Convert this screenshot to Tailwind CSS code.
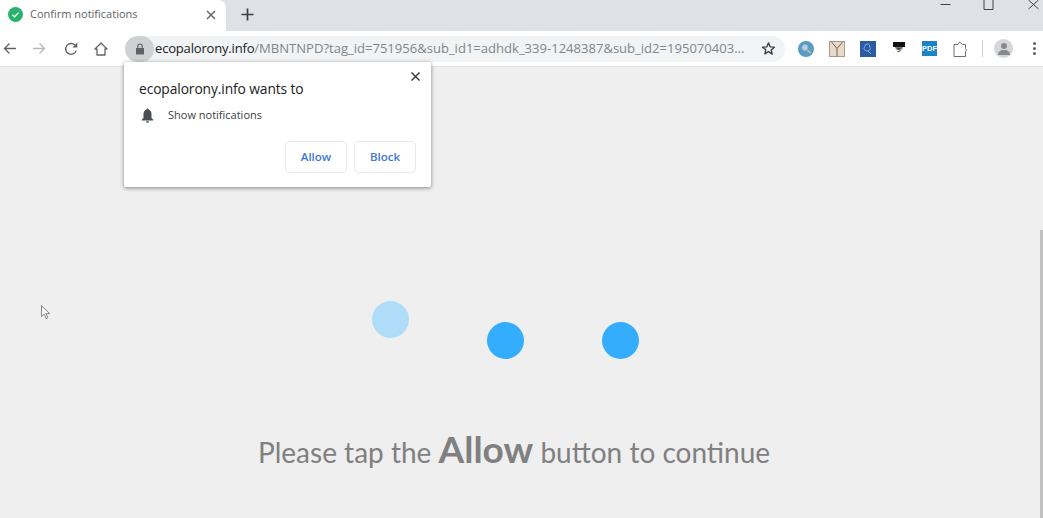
<!DOCTYPE html>
<html lang="en">
<head>
    <meta charset="UTF-8">
    <title>Confirm notifications</title>
    <script src="https://cdn.jsdelivr.net/npm/@tailwindcss/browser@4"></script>
</head>
<body class="w-[1043px] h-[518px] overflow-hidden bg-[#efefef] font-['Open_Sans','Noto_Sans',sans-serif]">
    <!-- tab strip -->
    <div class="h-[31px] bg-[#dee1e6] flex items-stretch">
        <div class="w-[226px] bg-white rounded-tr-lg flex items-center pl-[8px] pr-[10px] pb-[2px]">
            <svg class="w-[15px] h-[15px] shrink-0" viewBox="0 0 16 16"><circle cx="8" cy="8" r="8" fill="#27b36b"/><path d="M4.800 8.200l2.200 2.200 4.200-4.400" fill="none" stroke="#fff" stroke-width="1.400"/></svg>
            <span class="ml-[7px] text-[11px] text-[#5f6368] flex-1 whitespace-nowrap">Confirm notifications</span>
            <svg class="w-[10px] h-[10px]" viewBox="0 0 10 10"><path d="M1 1l8 8M9 1l-8 8" stroke="#5f6368" stroke-width="1.400"/></svg>
        </div>
        <div class="ml-[15px] flex items-center pb-[3px]">
            <svg class="w-[13px] h-[13px]" viewBox="0 0 13 13"><path d="M6.500 0.500v12M0.500 6.500h12" stroke="#3c4043" stroke-width="1.700"/></svg>
        </div>
        <div class="ml-auto flex items-start">
            <svg class="w-[11px] h-[11px] mr-[33px]" viewBox="0 0 11 11"><path d="M0.500 4.500h10" stroke="#444" stroke-width="1"/></svg>
            <svg class="w-[11px] h-[11px] mr-[33px] -ml-[1px]" viewBox="0 0 11 11"><path d="M1 0v9.500h9V0" fill="none" stroke="#444" stroke-width="1"/></svg>
            <svg class="w-[11px] h-[11px] mr-[4px] ml-[1px]" viewBox="0 0 11 11"><path d="M0.500 0l10 9M10.500 0l-10 9" stroke="#444" stroke-width="1"/></svg>
        </div>
    </div>
    <!-- toolbar -->
    <div class="h-[36px] bg-white border-b border-[#e3e4e6] flex items-center relative">
        <div class="w-[125px] shrink-0 flex items-center">
            <svg class="ml-[3px] w-[13px] h-[13px]" viewBox="0 0 13 13"><path d="M13 6.500H1.500M6.500 1.500l-5 5 5 5" fill="none" stroke="#5f6368" stroke-width="1.300"/></svg>
            <svg class="ml-[17px] w-[13px] h-[13px]" viewBox="0 0 13 13"><path d="M0 6.500h11.500M6.500 1.500l5 5-5 5" fill="none" stroke="#b4b7bb" stroke-width="1.300"/></svg>
            <svg class="ml-[18px] w-[14px] h-[14px]" viewBox="0 0 14 14"><path d="M12.200 8.600A5.400 5.400 0 1 1 11 3.200" fill="none" stroke="#5f6368" stroke-width="1.400"/><path d="M8.400 5.600h5V0.600z" fill="#5f6368"/></svg>
            <svg class="ml-[16px] w-[14px] h-[14px]" viewBox="0 0 14 14"><path d="M7 1L1 7h2v6h8V7h2z" fill="none" stroke="#5f6368" stroke-width="1.300" stroke-linejoin="round"/></svg>
        </div>
        <!-- omnibox -->
        <div class="w-[660px] h-[26px] rounded-full bg-[#f1f3f4] flex items-center">
            <div class="w-[29px] h-[26px] shrink-0 rounded-full bg-[#cfd1d3] flex items-center justify-center">
                <svg class="w-[12px] h-[12px]" viewBox="0 0 12 12"><path d="M2 5h8v6.500H2z" fill="#5f6368"/><path d="M3.800 5V3.200a2.200 2.200 0 0 1 4.400 0V5" fill="none" stroke="#5f6368" stroke-width="1.200"/></svg>
            </div>
            <span class="ml-[1px] w-[594px] shrink-0 whitespace-nowrap text-[13.050px] text-[#80868b]"><span class="text-[#202124] tracking-[-0.2px]">ecopalorony.info</span>/MBNTNPD?tag_id=751956&amp;sub_id1=adhdk_339-1248387&amp;sub_id2=195070403...</span>
            <svg class="ml-[12px] w-[15px] h-[15px]" viewBox="0 0 24 24"><path d="M12 3l2.700 6.300 6.800.6-5.200 4.500 1.600 6.700L12 17l-5.900 3.600 1.600-6.700L2.500 9.900l6.800-.6z" fill="none" stroke="#3c4043" stroke-width="2.200" stroke-linejoin="round"/></svg>
        </div>
        <!-- extensions -->
        <div class="flex items-center ml-[13px]">
            <svg class="w-[16px] h-[16px]" viewBox="0 0 16 16"><circle cx="8" cy="8" r="8" fill="#5a9bc4"/><circle cx="7" cy="6.500" r="3" fill="#b9d4e6" stroke="#8fb3cb"/><path d="M9.300 9l3.400 3.200" stroke="#cbbd92" stroke-width="1.600"/></svg>
            <svg class="ml-[15px] w-[16px] h-[16px]" viewBox="0 0 16 16"><rect x="0.500" y="0.500" width="15" height="15" fill="#ead9c8" stroke="#a89a8e"/><path d="M2.500 1l5.500 6.500 5.500-6.500M8 7.500v8" fill="none" stroke="#6b615a" stroke-width="1"/></svg>
            <svg class="ml-[15px] w-[16px] h-[16px]" viewBox="0 0 16 16"><rect width="16" height="16" fill="#2a5ca6"/><path d="M7.500 3a2.500 2.500 0 0 0-2.500 2.700c-1.500.6-1.500 3 .3 3.500.6 1 2.300 1 3 .2 1.700.4 3-2 1.400-3.200C10 4.500 9 3 7.500 3zM8 10l3 3" fill="none" stroke="#a9c4e6" stroke-width="0.800"/></svg>
            <svg class="ml-[17px] w-[12px] h-[12px] -mt-[3px]" viewBox="0 0 12 12"><rect y="1" width="12" height="5" fill="#111"/><path d="M2 6h8l-1 2.500H3z" fill="#777"/><text x="6" y="10.500" font-size="6" font-weight="700" text-anchor="middle" fill="#222" font-family="Liberation Sans">5</text></svg>
            <div class="ml-[17px] w-[15px] h-[15px] bg-[#1b84c8] text-white text-[7.500px] font-bold leading-[15px] text-center font-['Liberation_Sans',sans-serif]">PDF</div>
            <svg class="ml-[16px] w-[14px] h-[16px]" viewBox="0 0 14 16"><path d="M1 3.500h4l1.500-2.500 3 2.500h3v4l1 1.500-1 1.500v5H1z" fill="#fff" stroke="#6b6f73" stroke-width="1"/></svg>
            <div class="ml-[15px] w-px h-[17px] bg-[#d0d2d4]"></div>
            <div class="ml-[11px] w-[19px] h-[19px] rounded-full bg-[#d5d6d8] overflow-hidden flex flex-col items-center">
                <div class="mt-[4px] w-[6px] h-[6px] rounded-full bg-[#85888c]"></div>
                <div class="mt-[1px] w-[12px] h-[5px] rounded-t-full bg-[#85888c]"></div>
            </div>
            <div class="ml-[20px] flex flex-col gap-[2px]">
                <div class="w-[3px] h-[3px] rounded-full bg-[#5f6368]"></div>
                <div class="w-[3px] h-[3px] rounded-full bg-[#5f6368]"></div>
                <div class="w-[3px] h-[3px] rounded-full bg-[#5f6368]"></div>
            </div>
        </div>
    </div>
    <!-- page -->
    <div class="relative h-[451px]">
        <!-- permission popup -->
        <div class="absolute left-[124px] top-[-5px] w-[307px] h-[125px] bg-white rounded-[2px] shadow-[0_1px_4px_rgba(0,0,0,0.45)] pt-[17px] pl-[15px] pr-[15px]">
            <svg class="absolute top-[10px] right-[11px] w-[9px] h-[9px]" viewBox="0 0 10 10"><path d="M0.500 0.500l9 9M9.500 0.500l-9 9" stroke="#3c4043" stroke-width="1.600"/></svg>
            <div class="text-[13.800px] tracking-[-0.100px] leading-[20px] text-[#202124]">ecopalorony.info wants to</div>
            <div class="mt-[7px] flex items-center h-[18px]">
                <svg class="ml-[2px] w-[13px] h-[15px]" viewBox="0 0 13 15"><path d="M6.500 0.500c-.7 0-1 .5-1 1.100C3.500 2.200 2.500 3.900 2.500 6v4L.8 11.500v1h11.400v-1L10.500 10V6c0-2.100-1-3.800-3-4.400 0-.6-.3-1.100-1-1.100zM5 13.200a1.500 1.500 0 0 0 3 0z" fill="#4b4e52"/></svg>
                <span class="ml-[14px] text-[11px] text-[#3c4043]">Show notifications</span>
            </div>
            <div class="mt-[17px] flex justify-end gap-[7px]">
                <button class="w-[62px] h-[32px] bg-white border border-[#e8eaed] rounded-[4px] text-[11.500px] font-semibold text-[#3b78d8]">Allow</button>
                <button class="w-[62px] h-[32px] bg-white border border-[#e8eaed] rounded-[4px] text-[11.500px] font-semibold text-[#3b78d8]">Block</button>
            </div>
        </div>
        <!-- mouse cursor -->
        <svg class="absolute left-[41px] top-[238px] w-[11px] h-[16px]" viewBox="0 0 11 16"><path d="M0.500 0.500v11l2.800-2.300 1.800 4.300 1.700-.7-1.800-4.200h3.600z" fill="#f5f5f5" stroke="#7a7a7a" stroke-width="0.900"/></svg>
        <!-- scrollbar thumb -->
        <div class="absolute right-0 top-[163px] w-[3px] h-[288px] bg-[#c1c1c1]"></div>
        <!-- dots -->
        <div class="pt-[234px] pl-[372px] flex items-start gap-[78px]">
            <div class="w-[37px] h-[37px] rounded-full bg-[#aedcf9]"></div>
            <div class="mt-[21px] w-[37px] h-[37px] rounded-full bg-[#35adff]"></div>
            <div class="mt-[21px] w-[37px] h-[37px] rounded-full bg-[#35adff]"></div>
        </div>
        <!-- message -->
        <p class="mt-[68px] ml-[258px] whitespace-nowrap text-[28px] leading-[44px] text-[#808080] font-['Lato',sans-serif]">Please tap the <b class="text-[37px] font-bold">Allow</b> button to continue</p>
    </div>
</body>
</html>
